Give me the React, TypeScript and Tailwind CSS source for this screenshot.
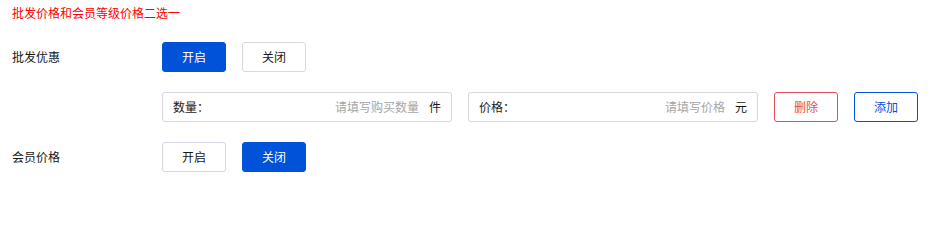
const font = "font-['Noto_Sans_CJK_SC','Noto_Sans',sans-serif]";

const Btn = ({
  label,
  variant,
}: {
  label: string;
  variant: "primary" | "default" | "danger" | "outline";
}) => {
  const styles = {
    primary: "bg-[#0052d9] border-[#0052d9] text-white",
    default: "bg-white border-[#d6d9e1] text-[#181818]",
    danger: "bg-white border-[#e34d59] text-[#e34d59]",
    outline: "bg-white border-[#0052d9] text-[#0052d9]",
  };
  return (
    <button
      className={`w-16 h-[30px] rounded-[3px] border text-xs leading-none flex items-center justify-center ${styles[variant]}`}
    >
      {label}
    </button>
  );
};

const Field = ({
  label,
  placeholder,
  unit,
}: {
  label: string;
  placeholder: string;
  unit: string;
}) => (
  <div className="w-[290px] h-[30px] border border-[#d6d9e1] rounded-[3px] flex items-center px-[10px] text-xs">
    <span className="text-[#181818]">{label}</span>
    <input
      className="flex-1 min-w-0 text-right outline-none placeholder:text-[#a6a6a6] bg-transparent"
      placeholder={placeholder}
    />
    <span className="ml-[10px] text-[#181818]">{unit}</span>
  </div>
);

export default function App() {
  return (
    <div className={`${font} w-[938px] h-[204px] bg-white pl-3 pt-[3px] text-xs`}>
      <div className="leading-5 text-[#ff0000]">批发价格和会员等级价格二选一</div>
      <div className="mt-[19px] flex flex-col gap-5">
        <div className="flex items-center">
          <span className="w-[150px] text-[#181818]">批发优惠</span>
          <div className="flex gap-4">
            <Btn label="开启" variant="primary" />
            <Btn label="关闭" variant="default" />
          </div>
        </div>
        <div className="flex items-center">
          <span className="w-[150px]" />
          <div className="flex gap-4">
            <Field label="数量：" placeholder="请填写购买数量" unit="件" />
            <Field label="价格：" placeholder="请填写价格" unit="元" />
            <Btn label="删除" variant="danger" />
            <Btn label="添加" variant="outline" />
          </div>
        </div>
        <div className="flex items-center">
          <span className="w-[150px] text-[#181818]">会员价格</span>
          <div className="flex gap-4">
            <Btn label="开启" variant="default" />
            <Btn label="关闭" variant="primary" />
          </div>
        </div>
      </div>
    </div>
  );
}
